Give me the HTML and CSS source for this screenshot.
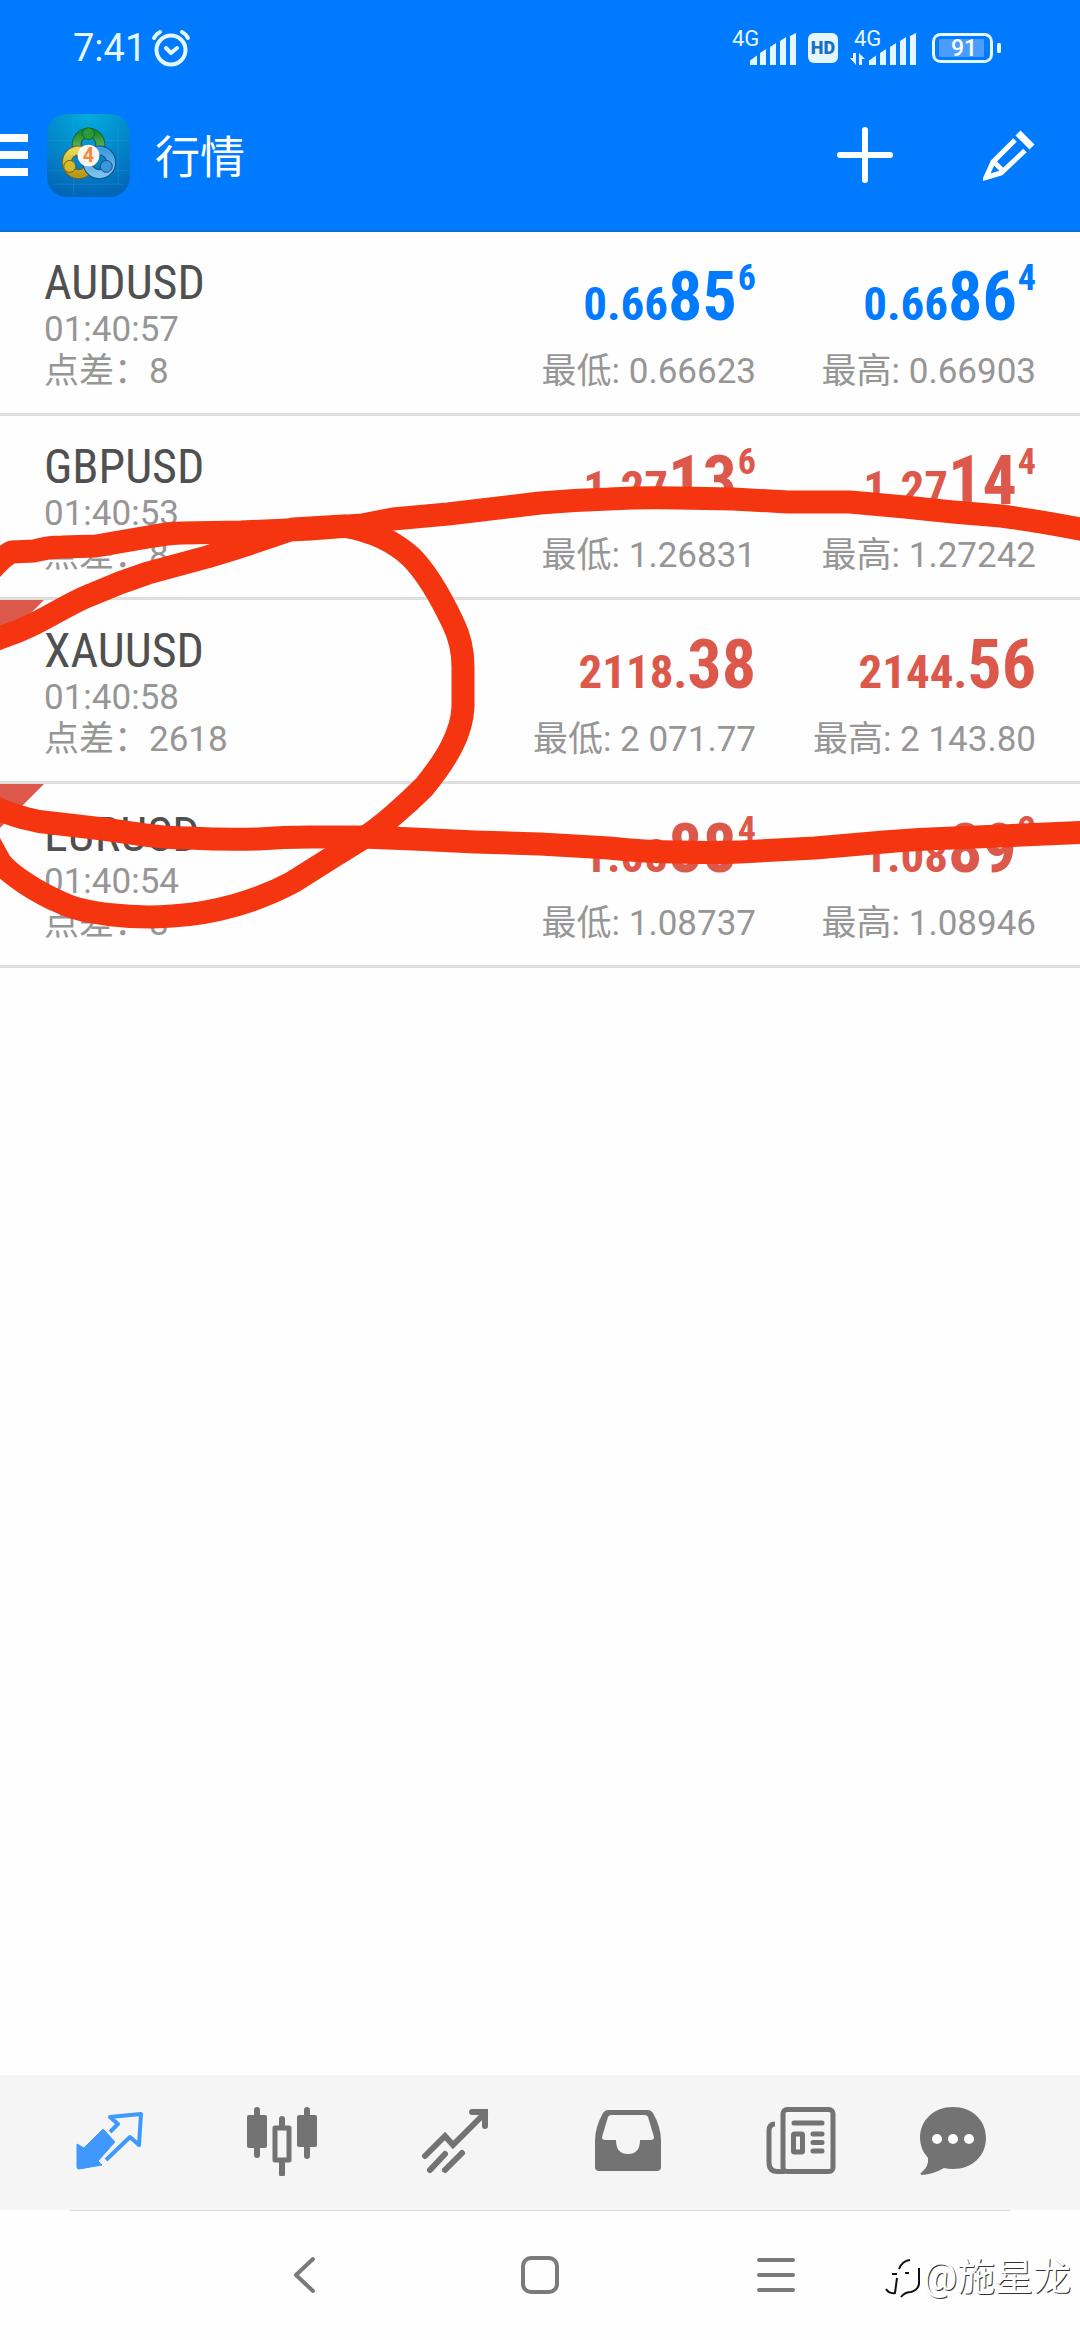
FILE: index.html
```html
<!DOCTYPE html>
<html lang="zh-CN">
<head>
<meta charset="utf-8">
<meta name="viewport" content="width=device-width, initial-scale=1">
<title>行情</title>
<link rel="stylesheet" href="styles.css">
</head>
<body>
<header class="top">
  <div class="status">
    <span class="clock">7:41</span>
    <svg class="alarm" width="40" height="38" viewBox="0 0 40 38" fill="none" stroke="currentColor" stroke-width="4" stroke-linecap="round">
      <circle cx="20" cy="21" r="14.5"/><path d="M15 19l5 5 6-5" stroke-linejoin="round"/><path d="M3 9Q5 5 9 3M37 9Q35 5 31 3"/>
    </svg>
    <svg class="signal" width="66" height="46" viewBox="0 -4 66 46" fill="currentColor">
      <text x="0" y="17" class="net">4G</text>
      <path d="M18 31.500l7-5v9.500h-7zM28 24l6-4v16h-6zM38 18l6-4v22h-6zM48 12l6-4v28h-6zM58 7l6-3v32h-6z"/>
    </svg>
    <svg class="hd" width="30" height="30" viewBox="0 0 30 30">
      <rect width="30" height="30" rx="6" fill="currentColor"/><text x="15" y="21" text-anchor="middle" class="hd-label">HD</text>
    </svg>
    <svg class="signal" width="70" height="46" viewBox="-4 -4 70 46" fill="currentColor">
      <text x="0" y="17" class="net">4G</text>
      <path d="M-4 29l3 0V24h3v12zM5 24l6 6H8v6H5z"/>
      <path d="M15 31.500l7-5v9.500h-7zM26 24l6-4v16h-6zM36 18l6-4v22h-6zM46 12l6-4v28h-6zM56 7l6-3v32h-6z"/>
    </svg>
    <svg class="battery" width="70" height="30" viewBox="0 0 70 30">
      <rect x="1.500" y="1.500" width="58" height="27" rx="7" fill="none" stroke="currentColor" stroke-width="3"/>
      <rect x="7" y="6" width="45" height="18" fill="#4a9dff"/>
      <rect x="65" y="10" width="4" height="10" rx="1.500" fill="currentColor"/>
      <text x="32" y="23" text-anchor="middle" class="charge">91</text>
    </svg>
  </div>
  <div class="toolbar">
    <button class="menu" aria-label="菜单"><svg width="28" height="42" viewBox="0 0 28 42" fill="#fff"><path d="M0 0h28v8H0zM0 17h28v8H0zM0 34h28v8H0z"/></svg></button>
    <svg class="logo" width="83" height="83" viewBox="0 0 84 84">
      <defs>
        <radialGradient id="sky" cx="50%" cy="0%" r="100%"><stop offset="0" stop-color="#03addf"/><stop offset="1" stop-color="#0266b8"/></radialGradient>
        <linearGradient id="green" x2="0" y2="1"><stop offset="0" stop-color="#1d8a30"/><stop offset="1" stop-color="#8ccb72"/></linearGradient>
        <linearGradient id="gold" x2="0" y2="1"><stop offset="0" stop-color="#e8d95a"/><stop offset="1" stop-color="#b79a1c"/></linearGradient>
        <linearGradient id="blue" x2="0" y2="1"><stop offset="0" stop-color="#3f9be0"/><stop offset="1" stop-color="#7cc0ee"/></linearGradient>
      </defs>
      <rect width="84" height="84" rx="20" fill="url(#sky)"/>
      <path d="M27 2v80M72 12v60M2 27h80M2 57h80M6 71h72" stroke="#3aa6e0" stroke-opacity=".3"/>
      <g fill="none" stroke-linecap="round">
        <circle cx="42" cy="31" r="12" stroke="#14652f" stroke-width="10"/><circle cx="42" cy="31" r="12" stroke="url(#green)" stroke-width="8"/>
        <circle cx="32" cy="49" r="12" stroke="#6b6420" stroke-width="10"/><circle cx="32" cy="49" r="12" stroke="url(#gold)" stroke-width="8"/>
        <circle cx="53" cy="49" r="12" stroke="#0d4f8c" stroke-width="10"/><circle cx="53" cy="49" r="12" stroke="url(#blue)" stroke-width="8"/>
      </g>
      <circle cx="42" cy="20" r="6" fill="#2a9a3a" stroke="#14652f"/><circle cx="23" cy="53" r="6" fill="#d6b92e" stroke="#6b6420"/><circle cx="60" cy="53" r="6" fill="#3d94d8" stroke="#0d4f8c"/>
      <circle cx="42" cy="42" r="11" fill="#fbf6f1"/>
      <text x="42" y="49" text-anchor="middle" class="logo-digit">4</text>
    </svg>
    <h1 class="title">行情</h1>
    <button class="tool" aria-label="添加"><svg width="56" height="56" viewBox="0 0 56 56" stroke="#fff" stroke-width="6" stroke-linecap="round"><path d="M28 3v50M3 28h50"/></svg></button>
    <button class="tool" aria-label="编辑"><svg width="52" height="52" viewBox="0 0 52 52" fill="none" stroke="#fff" stroke-width="5"><path d="M32 11L10 33L3 48.500L18 44L42 21.500M10 32l11 11" /><path d="M35 4l14 14" stroke-width="7"/></svg></button>
  </div>
</header>

<main class="quotes">
  <ul class="list">
    <li class="row up">
      <div class="info"><h2 class="symbol">AUDUSD</h2><p class="meta">01:40:57</p><p class="meta">点差：8</p></div>
      <div class="quote"><p class="price"><span class="lead">0.66</span>85<span class="pip">6</span></p><p class="meta">最低: 0.66623</p></div>
      <div class="quote"><p class="price"><span class="lead">0.66</span>86<span class="pip">4</span></p><p class="meta">最高: 0.66903</p></div>
    </li>
    <li class="row down">
      <div class="info"><h2 class="symbol">GBPUSD</h2><p class="meta">01:40:53</p><p class="meta">点差：8</p></div>
      <div class="quote"><p class="price"><span class="lead">1.27</span>13<span class="pip">6</span></p><p class="meta">最低: 1.26831</p></div>
      <div class="quote"><p class="price"><span class="lead">1.27</span>14<span class="pip">4</span></p><p class="meta">最高: 1.27242</p></div>
    </li>
    <li class="row down flagged">
      <div class="info"><h2 class="symbol">XAUUSD</h2><p class="meta">01:40:58</p><p class="meta">点差：2618</p></div>
      <div class="quote"><p class="price"><span class="lead">2118.</span>38</p><p class="meta">最低: 2 071.77</p></div>
      <div class="quote"><p class="price"><span class="lead">2144.</span>56</p><p class="meta">最高: 2 143.80</p></div>
    </li>
    <li class="row down flagged">
      <div class="info"><h2 class="symbol">EURUSD</h2><p class="meta">01:40:54</p><p class="meta">点差：8</p></div>
      <div class="quote"><p class="price"><span class="lead">1.08</span>88<span class="pip">4</span></p><p class="meta">最低: 1.08737</p></div>
      <div class="quote"><p class="price"><span class="lead">1.08</span>89<span class="pip">2</span></p><p class="meta">最高: 1.08946</p></div>
    </li>
  </ul>
  <svg class="ink" viewBox="0 232 1080 736" fill="none" stroke="#f53410" stroke-width="23" stroke-linecap="round" stroke-linejoin="round" aria-hidden="true">
    <path d="M-14 576Q2 556 12 552L34 551Q48 547 62 547L96 546L148 537Q170 533 183 533L241 532L310 529L362 525L393 519L448 514L540 503Q575 500 609 499Q645 497 678 498L733 499L788 502L850 502L905 507L953 512L1001 516Q1040 521 1090 531"/>
    <path d="M-20 645L0 638Q18 632 34 624C56 613 74 601 93 594Q120 582 148 573L207 557Q250 544 293 529L344 526C372 530 396 543 411 557C430 576 444 604 453 623C462 641 463 655 463 667V707C462 734 446 760 424 787C408 803 380 828 365 837L331 858L293 882C258 901 213 914 172 916C133 919 85 914 62 903C38 893 10 875 0 862L-12 840"/>
    <path d="M-16 802Q4 813 24 818Q38 822 52 823L103 829L138 834Q164 838 189 838Q224 840 258 839Q284 837 310 837L362 837L413 839L475 842L540 844L609 848Q645 852 678 852Q710 853 740 852L815 848L884 842Q920 839 953 838L1022 835L1090 832"/>
  </svg>
</main>

<nav class="tabs" aria-label="主导航">
  <button class="tab active" aria-label="行情"><svg width="70" height="70" viewBox="0 0 70 70" fill="none" stroke="currentColor" stroke-width="4" stroke-linejoin="round"><path d="M3 38l7 4L28 24q1-1 2 0l10 11q1 1 0 2L24 55l4 4-23 4q-2 0-2-2z" fill="currentColor" stroke-width="1"/><path d="M36 26l8-8-8-7 31-3-2 31-9-8-24 23"/></svg></button>
  <button class="tab" aria-label="图表"><svg width="70" height="70" viewBox="0 0 70 70" fill="none" stroke="currentColor" stroke-width="6" stroke-linecap="round"><path d="M10 4v45M60 4v46M35 13v12M35 54v14"/><rect x="0" y="9" width="20" height="33" rx="2" fill="currentColor" stroke="none"/><rect x="50" y="9" width="20" height="32" rx="2" fill="currentColor" stroke="none"/><rect x="28" y="22" width="14" height="32" stroke-width="5" stroke-linecap="butt" stroke-linejoin="round" fill="#f5f5f5"/></svg></button>
  <button class="tab" aria-label="交易"><svg width="70" height="70" viewBox="0 0 70 70" fill="none" stroke="currentColor" stroke-width="6" stroke-linecap="round"><path d="M5 50L25 30l8 9L65 7M52 6h13v14M10 64l15-16M25 64l17-17"/></svg></button>
  <button class="tab" aria-label="历史"><svg width="70" height="70" viewBox="0 0 70 70" fill="currentColor" fill-rule="evenodd"><path d="M15 4h40q3 0 5 3 8 14 8 28v26q0 4-4 4H6q-4 0-4-4V35Q2 21 10 7q2-3 5-3zM18 9q-2 0-3 2L9 31q0 3 3 3h11q0 14 12 14t12-14h11q3 0 3-3L55 11q-1-2-3-2z"/></svg></button>
  <button class="tab" aria-label="新闻"><svg width="70" height="70" viewBox="0 0 70 70" fill="none" stroke="currentColor" stroke-width="5"><rect x="17" y="3.500" width="50" height="62" rx="4"/><path d="M9 18q-6 0-6 7v31q0 9.500 8 9.500h8"/><path d="M28 17h28M47 28h9M47 36.500h9M47 45h9" stroke-linecap="round"/><rect x="27.500" y="28" width="9" height="18" rx="1"/></svg></button>
  <button class="tab" aria-label="消息"><svg width="70" height="70" viewBox="0 0 70 70"><path d="M35 1c19 0 33 13 33 31S54 63 35 63q-5 0-9-1-10 6-22 7-3-1 0-3 7-6 6-14Q2 43 2 32C2 14 16 1 35 1z" fill="currentColor"/><g fill="#fff"><circle cx="19" cy="33" r="5"/><circle cx="35" cy="33" r="5"/><circle cx="51" cy="33" r="5"/></g></svg></button>
</nav>

<footer class="system">
  <button class="key" aria-label="返回"><svg width="40" height="40" viewBox="0 0 40 40"><path d="M29 4L12 20l17 16"/></svg></button>
  <button class="key" aria-label="主页"><svg width="40" height="40" viewBox="0 0 40 40"><rect x="3" y="3" width="34" height="34" rx="8"/></svg></button>
  <button class="key" aria-label="最近任务"><svg width="40" height="40" viewBox="0 0 40 40"><path d="M3 5h34M3 20h34M3 35h34"/></svg></button>
  <div class="watermark">
    <svg width="36" height="44" viewBox="0 0 36 44" fill="none" stroke="#111" stroke-width="2"><path d="M1 34q3 5 9 4l2-15M7 19h5M14 14Q17 6 25 5M34 13v16q-1 6-8 8-6 0-10 5M20 18h4"/></svg>
    <span>@施星龙</span>
  </div>
</footer>
</body>
</html>
```

FILE: styles.css
```css
* { box-sizing: border-box; }

body {
  margin: 0;
  min-height: 100vh;
  display: flex;
  flex-direction: column;
  background: #fefefe;
  font-family: Roboto, "Noto Sans CJK SC", sans-serif;
}

h1, h2, p, ul { margin: 0; padding: 0; font-weight: 400; }

button {
  padding: 0;
  border: 0;
  background: none;
  color: inherit;
}

svg { display: block; flex: none; }

/* header */
.top {
  background: #007aff;
  border-bottom: 2px solid #0d6ed0;
  color: #e4f6ff;
}

.status {
  display: flex;
  align-items: center;
  height: 96px;
  padding: 0 78px 0 73px;
}

.clock { font-size: 38px; line-height: 40px; }
.alarm { margin-left: 5px; margin-right: auto; }
.hd { margin: 0 12px 0 10px; }
.battery { margin-left: 12px; }
.net { font-size: 22px; }
.hd-label { font-size: 18px; font-weight: 900; fill: #1a6fc4; }
.charge { font-size: 23px; font-weight: 500; fill: #fff; }

.toolbar {
  display: flex;
  align-items: center;
  height: 134px;
  padding: 0 45px 16px 0;
}

.menu { margin-right: 19px; }
.logo-digit { font-size: 20px; font-weight: 700; fill: #f08a3c; }

.title {
  flex: 1;
  margin-left: 25px;
  padding-top: 8px;
  font-size: 45px;
  line-height: 56px;
  color: #fff;
}

.tool + .tool { margin-left: 90px; }

/* quotes */
.quotes { position: relative; flex: 1; }
.list { list-style: none; }

.row {
  position: relative;
  display: grid;
  grid-template-columns: 1fr 280px 280px;
  height: 184px;
  padding: 22px 44px 0;
  border-bottom: 3px solid #dedede;
}

.symbol {
  margin-top: 3px;
  font-family: "Roboto Condensed", "Liberation Sans Narrow", Roboto, sans-serif;
  font-size: 48px;
  line-height: 52px;
  color: #505050;
}

.meta {
  font-size: 35px;
  line-height: 42px;
  color: #969696;
  white-space: nowrap;
}

.quote { text-align: right; }

.price {
  margin-bottom: 11px;
  font-family: "Roboto Condensed", "Liberation Sans Narrow", Roboto, sans-serif;
  font-size: 68px;
  font-weight: 700;
  line-height: 86px;
  white-space: nowrap;
}

.lead { font-size: 47px; line-height: 1; }
.pip { margin-left: 1px; font-size: 36px; line-height: 1; vertical-align: 30px; }

.up .price { color: #007aff; }
.down .price { color: #dc584b; }

.flagged::before {
  content: "";
  position: absolute;
  top: 0;
  left: 0;
  border-top: 44px solid #dc584b;
  border-right: 44px solid transparent;
}

.ink {
  position: absolute;
  top: 0;
  left: 0;
  width: 100%;
}

/* bottom tabs */
.tabs {
  display: grid;
  grid-template-columns: repeat(5, 4fr) 3fr;
  height: 135px;
  padding: 0 62px 4px 22px;
  background: #f5f5f5;
  color: #737373;
}

.tab { display: grid; place-items: center; }
.active { color: #3f99fc; }

/* system keys */
.system {
  position: relative;
  display: grid;
  grid-template-columns: repeat(3, 236px);
  justify-content: center;
  height: 130px;
}

.system::before {
  content: "";
  position: absolute;
  top: 0;
  left: 70px;
  right: 70px;
  height: 1px;
  background: #dcdcdc;
}

.key { display: grid; place-items: center; }
.key svg { fill: none; stroke: #7a7a7a; stroke-width: 4; stroke-linecap: round; stroke-linejoin: round; }

.watermark {
  position: absolute;
  right: 9px;
  bottom: 39px;
  display: flex;
  align-items: center;
  gap: 2px;
  color: #fff;
  font-size: 38px;
  line-height: 48px;
  text-shadow: 1px 1px 0 #333;
}
```
